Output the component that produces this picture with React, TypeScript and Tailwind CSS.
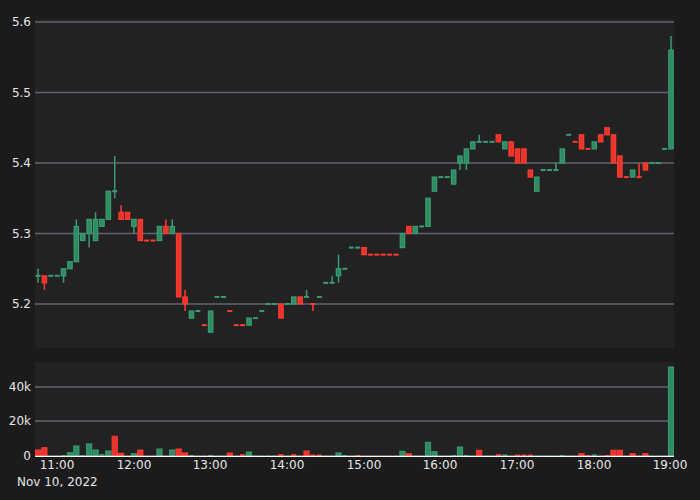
import React from "react";

type C = [string, number, number, number?, number?];
const raw: C[] = [
  ["g",524,524,525,523],["r",524,523,524,522],["g",524,524],["g",524,524],["g",524,525,525,523],
  ["g",525,526],["g",526,531,532],["g",529,530],["g",530,532,532,528],["g",529,532,533],
  ["g",531,532],["g",532,536],["g",536,536,541,535],["r",533,532,534],["r",533,532],
  ["g",531,532,532,530],["r",532,529],["r",529,529],["r",529,529],["g",529,531],
  ["r",531,530,532],["g",530,531,532],["r",530,521],["r",521,520,522,519],["g",518,519],
  ["g",519,519],["r",517,517],["g",516,519],["g",521,521],["g",521,521],
  ["r",519,519],["r",517,517],["r",517,517],["g",517,518],["g",518,518],
  ["g",519,519],["g",520,520],["g",520,520],["r",520,518],["g",520,520],
  ["g",520,521],["r",521,520],["g",521,521,522],["r",520,520,520,519],["g",521,521],
  ["g",523,523],["g",523,523,524],["g",524,525,527,523],["g",525,525],["g",528,528],
  ["g",528,528],["r",528,527],["r",527,527],["r",527,527],["r",527,527],
  ["r",527,527],["r",527,527],["g",528,530],["r",531,530],["g",530,531],
  ["g",531,531],["g",531,535],["g",536,538],["g",538,538],["g",538,538],
  ["g",537,539],["g",540,541,541,539],["g",540,542,542,539],["g",542,543],["g",543,543,544],
  ["g",543,543],["g",543,543],["r",544,543],["g",542,543],["r",543,541],
  ["r",542,540],["r",542,540],["r",539,538],["g",536,538],["g",539,539],
  ["g",539,539],["g",539,539,540],["g",540,542],["g",544,544],["r",543,543],
  ["r",544,542],["r",542,542],["g",542,543],["r",544,543],["r",545,544],
  ["r",544,540],["r",541,538],["r",538,538],["g",538,539,539],["r",538,538,540],
  ["r",540,539],["g",540,540],["g",540,540],["g",542,542],["g",542,556,558],
];

const vols: Record<number, [number, string]> = {
  0:[6,"r"],1:[8.3,"r"],4:[1,"g"],5:[3.3,"g"],6:[10,"g"],7:[1,"g"],8:[12,"g"],9:[6,"g"],10:[2,"g"],11:[5,"g"],
  12:[19.7,"r"],13:[2.7,"r"],15:[2.3,"g"],16:[6,"r"],19:[7,"g"],21:[6,"g"],22:[7,"r"],23:[3,"r"],24:[1,"g"],
  27:[1,"g"],30:[3,"r"],32:[2,"r"],33:[4,"g"],38:[2,"r"],40:[2,"r"],42:[5,"r"],43:[1.5,"r"],44:[1.5,"r"],
  47:[3,"g"],48:[1,"g"],50:[1,"r"],57:[4.7,"g"],58:[2.3,"r"],61:[13.7,"g"],62:[4.3,"g"],65:[1,"g"],66:[9,"g"],
  67:[1,"g"],69:[5.7,"r"],72:[2,"r"],73:[1.7,"g"],75:[1.5,"r"],76:[1.5,"r"],77:[1.5,"r"],82:[1,"g"],
  85:[2.3,"r"],86:[1,"r"],87:[1.7,"g"],89:[1,"r"],90:[5.7,"r"],91:[5.7,"r"],93:[2.3,"r"],95:[2.3,"r"],99:[89,"g"],
};

const G = { fill: "#2e8b62", stroke: "#3a9d72" };
const R = { fill: "#e8342c", stroke: "#ff3b30" };
const X0 = 35;
const TOP = 19;
const py = (p: number) => 22 + (5.6 - p / 100) * 705 - TOP;
const cx = (i: number) => 38 + i * 6.394 - X0;

const font = { fontFamily: "'DejaVu Sans', sans-serif" };

export default function App() {
  const grid = [5.6, 5.5, 5.4, 5.3, 5.2];
  const times = ["11:00","12:00","13:00","14:00","15:00","16:00","17:00","18:00","19:00"];
  const tx = [57,134,210,287,364,440,517,594,670];
  return (
    <div className="w-[700px] h-[500px] bg-[#1b1b1b] text-[#e6e6e6] text-[12px] flex flex-col pt-[19px]" style={font}>
      <div className="flex h-[329px]">
        <div className="w-[35px] relative">
          {grid.map((g) => (
            <span key={g} className="absolute right-[4px] leading-none" style={{ top: py(g * 100) - 6 }}>{g.toFixed(1)}</span>
          ))}
        </div>
        <div className="w-[639px] bg-[#222222]">
          <svg width="639" height="329">
            {grid.map((g) => (
              <line key={g} x1={0} x2={639} y1={py(g * 100)} y2={py(g * 100)} stroke="#5d6670" strokeWidth={1.5} />
            ))}
            {raw.map((c, i) => {
              const [col, o, cl, h0, l0] = c;
              const col2 = col === "g" ? G : R;
              const hi = Math.max(h0 ?? Math.max(o, cl), o, cl);
              const lo = Math.min(l0 ?? Math.min(o, cl), o, cl);
              const x = cx(i);
              const top = py(Math.max(o, cl));
              const bot = py(Math.min(o, cl));
              const doji = o === cl;
              return (
                <g key={i}>
                  {hi !== lo && (
                    <line x1={x} x2={x} y1={py(hi)} y2={py(lo)} stroke={col2.stroke} strokeWidth={1.5} />
                  )}
                  {doji ? (
                    <rect x={x - 2.5} y={top - 1} width={5} height={2} fill={col2.stroke} />
                  ) : (
                    <rect x={x - 2.2} y={top} width={4.4} height={bot - top} fill={col2.fill} stroke={col2.stroke} strokeWidth={1.2} />
                  )}
                </g>
              );
            })}
          </svg>
        </div>
      </div>
      <div className="flex h-[95px] mt-[14px]">
        <div className="w-[35px] relative">
          {[["40k", 25], ["20k", 59], ["0", 94]].map(([t, y]) => (
            <span key={t as string} className="absolute right-[4px] leading-none" style={{ top: (y as number) - 6 }}>{t}</span>
          ))}
        </div>
        <div className="w-[639px] bg-[#222222]">
          <svg width="639" height="95">
            <line x1={0} x2={639} y1={25} y2={25} stroke="#5d6670" strokeWidth={1.5} />
            <line x1={0} x2={639} y1={59} y2={59} stroke="#5d6670" strokeWidth={1.5} />
            {raw.map((c, i) => {
              const v = vols[i];
              const h = v ? v[0] : 0.8;
              const col = v ? v[1] : c[0];
              const cc = col === "g" ? G : R;
              return (
                <rect key={i} x={cx(i) - 2.6} y={94 - h} width={5.2} height={h} fill={v ? cc.fill : cc.stroke}
                  stroke={v && h > 2 ? cc.stroke : "none"} strokeWidth={1} opacity={v ? 1 : 0.35} />
              );
            })}
            <line x1={0} x2={639} y1={94.5} y2={94.5} stroke="#ffffff" strokeWidth={1.5} />
          </svg>
        </div>
      </div>
      <div className="relative h-[40px]">
        {times.map((t, i) => (
          <span key={t} className="absolute top-[2px] leading-none -translate-x-1/2" style={{ left: tx[i] }}>{t}</span>
        ))}
        <span className="absolute left-[17px] top-[19px] leading-none">Nov 10, 2022</span>
      </div>
    </div>
  );
}
